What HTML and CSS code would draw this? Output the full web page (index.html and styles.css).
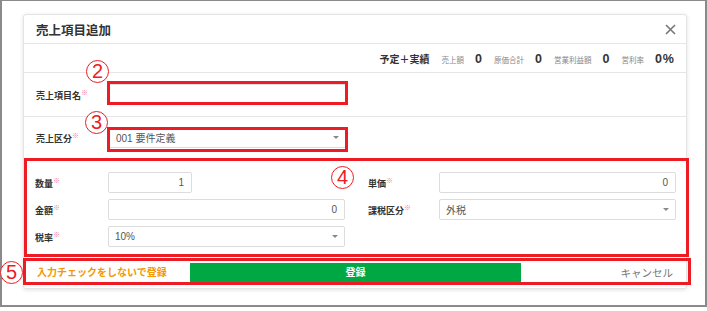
FILE: index.html
```html
<!DOCTYPE html>
<html lang="ja">
<head>
  <meta charset="UTF-8">
  <title>売上項目追加</title>
  <link rel="stylesheet" href="styles.css">
</head>
<body>

  <div class="screen">
    <div class="dialog">
      <div class="dlg-head">
        <h1 class="dlg-title">売上項目追加</h1>
        <span class="close">
          <svg width="11" height="11" viewBox="0 0 11 11"><path d="M1 1 L10 10 M10 1 L1 10" stroke="#777" stroke-width="1.6" fill="none"/></svg>
        </span>
      </div>

      <div class="summary">
        <span class="sum-title">予定＋実績</span>
        <span class="sum-label">売上額</span><span class="sum-value">0</span>
        <span class="sum-label">原価合計</span><span class="sum-value">0</span>
        <span class="sum-label">営業利益額</span><span class="sum-value">0</span>
        <span class="sum-label">営利率</span><span class="sum-value last">0%</span>
      </div>

      <div class="form-row row-name">
        <label class="lbl">売上項目名<span class="req">※</span></label>
        <div class="input wide"></div>
      </div>

      <div class="form-row row-kind">
        <label class="lbl">売上区分<span class="req">※</span></label>
        <div class="input wide select">001 要件定義<span class="caret"></span></div>
      </div>

      <div class="fields">
        <label class="lbl">数量<span class="req">※</span></label>
        <div><div class="input num short">1</div></div>
        <label class="lbl lbl-r">単価<span class="req">※</span></label>
        <div class="input num">0</div>

        <label class="lbl">金額<span class="req">※</span></label>
        <div class="input num">0</div>
        <label class="lbl lbl-r">課税区分<span class="req">※</span></label>
        <div class="input select">外税<span class="caret"></span></div>

        <label class="lbl">税率<span class="req">※</span></label>
        <div class="input select">10%<span class="caret"></span></div>
      </div>

      <div class="footer">
        <div class="foot-left">入力チェックをしないで登録</div>
        <div class="btn-save">登録</div>
        <div class="foot-right">キャンセル</div>
      </div>
    </div>
  </div>

  <!-- annotations -->
  <div class="box box-2"></div>
  <div class="box box-3"></div>
  <div class="box box-4"></div>
  <div class="box box-5"></div>
  <span class="mark mark-2">2</span>
  <span class="mark mark-3">3</span>
  <span class="mark mark-4">4</span>
  <span class="mark mark-5">5</span>

</body>
</html>
```

FILE: styles.css
```css
body {
  margin: 0;
  position: relative;
  width: 707px;
  height: 311px;
  font-family: "Liberation Sans", "Noto Sans CJK JP", sans-serif;
  color: #333;
  background-color: #fff;
}
.screen {
  width: 707px;
  height: 307px;
  box-sizing: border-box;
  border: 2px solid #8a8a8a;
  border-top-width: 1px;
  padding: 13px 0 0 21px;
}
.dialog {
  width: 664px;
  height: 275px;
  box-sizing: border-box;
  border: 1px solid #e4e4e4;
  border-radius: 3px;
  box-shadow: 0 1px 4px rgba(0, 0, 0, 0.12);
  background-color: #fff;
}
.dlg-head {
  height: 28px;
  border-bottom: 1px solid #e6e6e6;
  display: flex;
  align-items: center;
  justify-content: space-between;
  padding: 0 10px 0 12px;
}
.dlg-title {
  margin: 0;
  font-size: 12.5px;
  font-weight: bold;
  color: #333;
}
.close {
  display: flex;
  width: 11px;
  height: 11px;
}
.summary {
  height: 28px;
  border-bottom: 1px solid #e6e6e6;
  display: flex;
  align-items: baseline;
  justify-content: flex-end;
  padding: 0 11px 0 0;
  line-height: 30px;
}
.sum-title {
  font-size: 10px;
  font-weight: bold;
  margin-right: 12px;
}
.sum-label {
  font-size: 7.5px;
  color: #888;
  margin-right: 11px;
}
.sum-value {
  font-size: 12.5px;
  font-weight: bold;
  margin-right: 12px;
}
.sum-value.last {
  margin-right: 0;
  letter-spacing: 1px;
}
.form-row {
  display: flex;
  align-items: center;
  padding-left: 12px;
}
.row-name {
  height: 43px;
  border-bottom: 1px solid #e6e6e6;
}
.row-kind {
  height: 41px;
}
.lbl {
  width: 73px;
  flex-shrink: 0;
  font-size: 9px;
  font-weight: bold;
  color: #333;
}
.req {
  font-size: 7px;
  color: #f37a96;
  vertical-align: 4px;
}
.input {
  box-sizing: border-box;
  height: 21px;
  border: 1px solid #dcdcdc;
  border-radius: 2px;
  background-color: #fff;
  font-size: 10px;
  color: #555;
  display: flex;
  align-items: center;
  padding: 0 7px;
}
.wide {
  width: 237px;
}
.select {
  justify-content: space-between;
  padding-left: 6px;
}
.caret {
  width: 0;
  height: 0;
  border-left: 3px solid transparent;
  border-right: 3px solid transparent;
  border-top: 3px solid #888;
  margin-right: -1px;
}
.num {
  justify-content: flex-end;
}
.short {
  width: 84px;
}
.fields {
  height: 100px;
  box-sizing: border-box;
  padding: 14px 10px 0 11px;
  display: grid;
  grid-template-columns: 73px 237px 94px 237px;
  grid-auto-rows: 21px;
  row-gap: 6px;
  align-items: center;
}
.fields .lbl {
  width: auto;
}
.fields .lbl-r {
  padding-left: 23px;
}
.footer {
  display: flex;
  padding-top: 5px;
  height: 30px;
  box-sizing: border-box;
}
.foot-left {
  width: 166px;
  box-sizing: border-box;
  padding-left: 13px;
  font-size: 10px;
  font-weight: bold;
  color: #f39800;
  line-height: 20px;
}
.btn-save {
  width: 331px;
  height: 20px;
  background-color: #00a844;
  color: #fff;
  font-size: 10px;
  font-weight: bold;
  text-align: center;
  line-height: 20px;
}
.foot-right {
  flex: 1;
  text-align: right;
  padding-right: 13px;
  font-size: 10.5px;
  color: #777;
  line-height: 20px;
}

/* annotations */
.box {
  position: absolute;
  box-sizing: border-box;
  border: 3px solid #ed1c24;
}
.box-2 { left: 107px; top: 81px; width: 241px; height: 24px; }
.box-3 { left: 107px; top: 127px; width: 241px; height: 25px; }
.box-4 { left: 24px; top: 158px; width: 665px; height: 99px; }
.box-5 { left: 23px; top: 258px; width: 668px; height: 27px; }
.mark {
  position: absolute;
  box-sizing: border-box;
  width: 23px;
  height: 23px;
  border: 1px solid #ed1c24;
  border-radius: 50%;
  background-color: #fff;
  color: #ed1c24;
  font-size: 20px;
  line-height: 21px;
  text-align: center;
}
.mark-2 { left: 86px; top: 60px; }
.mark-3 { left: 85px; top: 111px; }
.mark-4 { left: 331px; top: 166px; }
.mark-5 { left: 0; top: 261px; }
```
